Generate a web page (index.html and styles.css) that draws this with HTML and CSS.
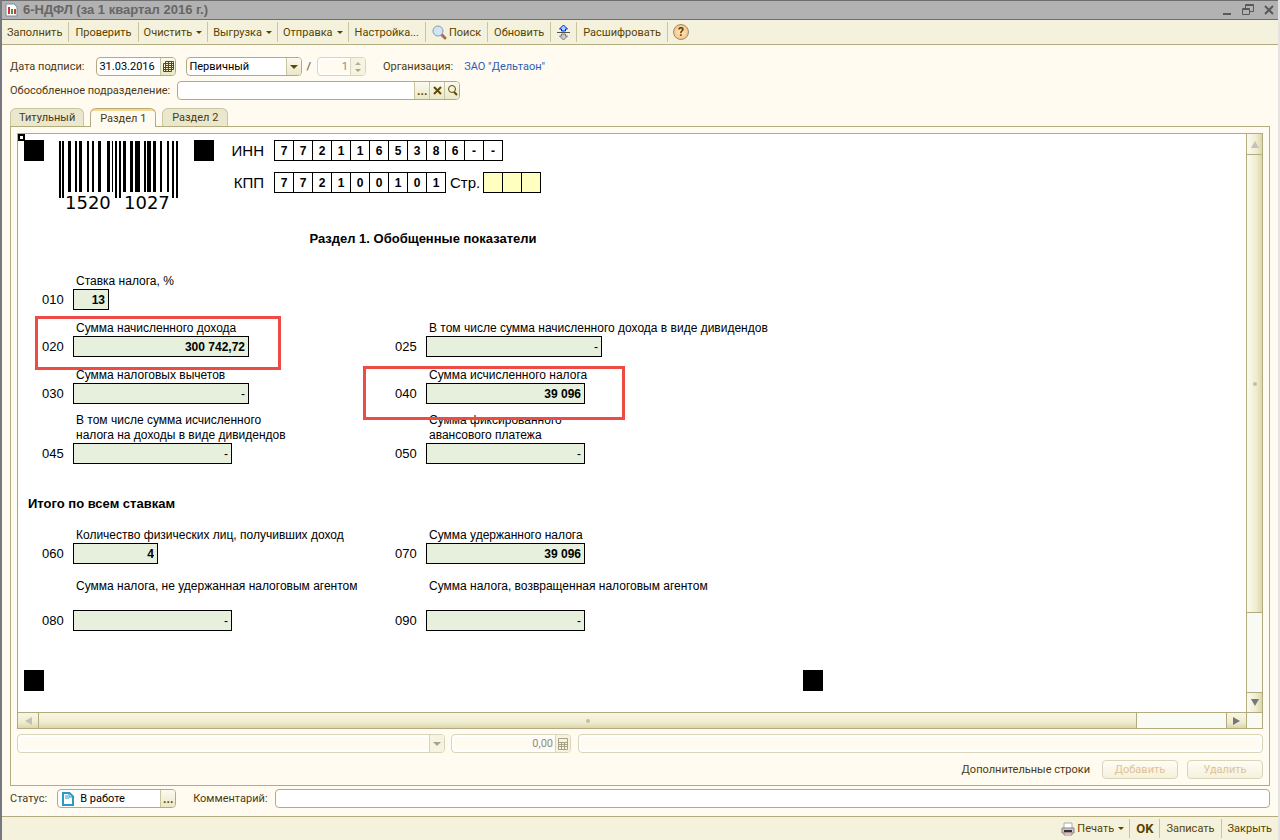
FILE: index.html
```html
<!DOCTYPE html>
<html lang="ru">
<head>
    <meta charset="UTF-8">
    <meta name="viewport" content="width=device-width, initial-scale=1.0">
    <title>6-НДФЛ (за 1 квартал 2016 г.)</title>
    <link rel="stylesheet" href="styles.css">
</head>
<body>
    <!-- Title bar -->
    <header class="titlebar">
        <svg class="title-icon" width="13" height="14" viewBox="0 0 13 14">
            <path d="M1 1h8l3 3v9H1z" fill="#fff" stroke="#7d8c9c"/>
            <path d="M3 4h2v7H3z" fill="#e03030"/>
            <path d="M6 6h2v5H6z" fill="#35a04a"/>
            <path d="M9 6h2v5H9z" fill="#e03030"/>
        </svg>
        <h1>6-НДФЛ (за 1 квартал 2016 г.)</h1>
        <div class="window-buttons">
            <button type="button" aria-label="Свернуть"><svg width="12" height="12"><path d="M2 9h8v2H2z" fill="#595959"/></svg></button>
            <button type="button" aria-label="Развернуть"><svg width="12" height="12" fill="none" stroke="#595959"><path d="M3.500 4V.5h8v7H8M3 1.500h9M.5 4.500h7v6h-7zM0 5.500h8"/></svg></button>
            <button type="button" aria-label="Закрыть"><svg width="12" height="12"><path d="M2 2l8 8M10 2l-8 8" stroke="#595959" stroke-width="2"/></svg></button>
        </div>
    </header>

    <!-- Toolbar -->
    <nav class="toolbar">
        <button type="button">Заполнить</button>
        <button type="button">Проверить</button>
        <button type="button" class="menu">Очистить</button>
        <button type="button" class="menu">Выгрузка</button>
        <button type="button" class="menu">Отправка</button>
        <button type="button">Настройка...</button>
        <button type="button">
            <svg width="15" height="15" viewBox="0 0 15 15">
                <path d="M9 9l4 4" stroke="#a5705a" stroke-width="3" stroke-linecap="round"/>
                <circle cx="6" cy="6" r="5" fill="#cfe6f8" stroke="#8f97ad"/>
            </svg>Поиск
        </button>
        <button type="button">Обновить</button>
        <button type="button" aria-label="Свернуть группы">
            <svg width="13" height="17" viewBox="0 0 13 17">
                <path d="M6.500 1l4 4h-2v2h-4V5h-2z" fill="#8fe0ff" stroke="#1414e0"/>
                <path d="M0 8.500h13" stroke="#555"/>
                <path d="M6.500 16l4-4h-2v-2h-4v2h-2z" fill="#ccc" stroke="#777"/>
            </svg>
        </button>
        <button type="button">Расшифровать</button>
        <button type="button" class="help" aria-label="Справка">?</button>
    </nav>

    <main>
        <!-- Document attributes -->
        <div class="row attributes">
            <label for="date">Дата подписи:</label>
            <div class="field date">
                <input type="text" id="date" value="31.03.2016">
                <button type="button" aria-label="Календарь">
                    <svg width="11" height="12" viewBox="0 0 11 12"><path d="M2.500.5h8v8h-2v2h-8v-8h2zM2.500 2.500h8M2.500 4.500h8M.5 6.500h10M.5 8.500h8M2.500 2v9M5.500 0v11M8.500 0v9" fill="none" stroke="#5f4a00"/></svg>
                </button>
            </div>
            <div class="field kind">
                <select aria-label="Вид документа"><option>Первичный</option></select>
                <span class="drop"></span>
            </div>
            <span class="slash">/</span>
            <div class="field number disabled">
                <input type="text" value="1" aria-label="Номер корректировки" disabled>
                <span class="spin"></span>
            </div>
            <span class="org">Организация:</span>
            <a href="#">ЗАО "Дельтаон"</a>
        </div>
        <div class="row">
            <label for="division">Обособленное подразделение:</label>
            <div class="field division">
                <input type="text" id="division">
                <button type="button" class="dots" aria-label="Выбрать">...</button>
                <button type="button" aria-label="Очистить"><svg width="9" height="9"><path d="M1 1l7 7M8 1l-7 7" stroke="#5f4a00" stroke-width="2"/></svg></button>
                <button type="button" aria-label="Открыть"><svg width="11" height="11" fill="none" stroke="#5f4a00"><circle cx="5" cy="4" r="3.500"/><path d="M7 7l3 3" stroke-width="2"/></svg></button>
            </div>
        </div>

        <!-- Tabs -->
        <div class="tabs">
            <button type="button">Титульный</button>
            <button type="button" class="active">Раздел 1</button>
            <button type="button">Раздел 2</button>
        </div>

        <div class="panel">
            <div class="sheet-frame">
                <div class="sheet">
                    <span class="cursor"></span>

                    <div class="sheet-head">
                        <span class="mark"></span>
                        <svg class="barcode" width="120" height="71" viewBox="0 0 120 71">
                            <path d="M0 0h2v57H0zM3 0h2v57H3zM56 0h2v57h-2zM60 0h2v57h-2zM113 0h2v57h-2zM117 0h2v57h-2z"/>
                            <path d="M9 0h3v51H9zM16 0h2v51h-2zM20 0h3v51h-3zM28 0h2v51h-2zM33 0h2v51h-2zM39 0h3v51h-3zM48 0h3v51h-3zM53 0h1v51h-1zM64 0h3v51h-3zM71 0h3v51h-3zM76 0h5v51h-5zM85 0h2v51h-2zM88 0h4v51h-4zM94 0h3v51h-3zM101 0h2v51h-2zM108 0h2v51h-2z"/>
                            <text x="6" y="68">1520</text>
                            <text x="65" y="68">1027</text>
                        </svg>
                        <span class="mark"></span>
                        <div class="codes">
                            <div class="code-row">
                                <span class="code-name">ИНН</span>
                                <div class="cells"><b>7</b><b>7</b><b>2</b><b>1</b><b>1</b><b>6</b><b>5</b><b>3</b><b>8</b><b>6</b><b>-</b><b>-</b></div>
                            </div>
                            <div class="code-row">
                                <span class="code-name">КПП</span>
                                <div class="cells"><b>7</b><b>7</b><b>2</b><b>1</b><b>0</b><b>0</b><b>1</b><b>0</b><b>1</b></div>
                                <span class="page-name">Стр.</span>
                                <div class="cells page"><b></b><b></b><b></b></div>
                            </div>
                        </div>
                    </div>

                    <h2>Раздел 1. Обобщенные показатели</h2>

                    <div class="figures">
                        <div class="figure">
                            <label for="f010">Ставка налога, %</label>
                            <span>010</span><input type="text" id="f010" class="w-xs" value="13">
                        </div>
                        <div class="figure start boxed">
                            <label for="f020">Сумма начисленного дохода</label>
                            <span>020</span><input type="text" id="f020" class="w-lg" value="300 742,72">
                        </div>
                        <div class="figure">
                            <label for="f025">В том числе сумма начисленного дохода в виде дивидендов</label>
                            <span>025</span><input type="text" id="f025" class="w-lg empty" value="-">
                        </div>
                        <div class="figure">
                            <label for="f030">Сумма налоговых вычетов</label>
                            <span>030</span><input type="text" id="f030" class="w-lg empty" value="-">
                        </div>
                        <div class="figure boxed wide">
                            <label for="f040">Сумма исчисленного налога</label>
                            <span>040</span><input type="text" id="f040" class="w-md" value="39 096">
                        </div>
                        <div class="figure double">
                            <label for="f045">В том числе сумма исчисленного<br>налога на доходы в виде дивидендов</label>
                            <span>045</span><input type="text" id="f045" class="w-md empty" value="-">
                        </div>
                        <div class="figure double">
                            <label for="f050">Сумма фиксированного<br>авансового платежа</label>
                            <span>050</span><input type="text" id="f050" class="w-md empty" value="-">
                        </div>
                    </div>

                    <h3>Итого по всем ставкам</h3>

                    <div class="figures totals">
                        <div class="figure">
                            <label for="f060">Количество физических лиц, получивших доход</label>
                            <span>060</span><input type="text" id="f060" class="w-sm" value="4">
                        </div>
                        <div class="figure">
                            <label for="f070">Сумма удержанного налога</label>
                            <span>070</span><input type="text" id="f070" class="w-md" value="39 096">
                        </div>
                        <div class="figure tall">
                            <label for="f080">Сумма налога, не удержанная налоговым агентом</label>
                            <span>080</span><input type="text" id="f080" class="w-md empty" value="-">
                        </div>
                        <div class="figure tall">
                            <label for="f090">Сумма налога, возвращенная налоговым агентом</label>
                            <span>090</span><input type="text" id="f090" class="w-md empty" value="-">
                        </div>
                    </div>

                    <div class="sheet-foot">
                        <span class="mark"></span>
                        <span class="mark"></span>
                    </div>
                </div>

                <!-- Scroll bars -->
                <div class="scroll vertical">
                    <button type="button" class="up" aria-label="Вверх"></button>
                    <div class="thumb"></div>
                    <div class="track"></div>
                    <button type="button" class="down" aria-label="Вниз"></button>
                </div>
                <div class="scroll horizontal">
                    <button type="button" class="left" aria-label="Влево"></button>
                    <div class="thumb"></div>
                    <div class="track"></div>
                    <button type="button" class="right" aria-label="Вправо"></button>
                </div>
                <div class="corner"></div>
            </div>

            <!-- Cell editing line -->
            <div class="row editing">
                <div class="field disabled cell-name">
                    <select aria-label="Показатель" disabled></select>
                    <span class="drop"></span>
                </div>
                <div class="field disabled cell-value">
                    <input type="text" value="0,00" aria-label="Значение" disabled>
                    <button type="button" aria-label="Калькулятор" disabled>
                        <svg width="10" height="12" viewBox="0 0 10 12"><path d="M.5.5h9v11h-9zM.5 4.500h9M.5 6.500h9M.5 8.500h9M3.500 4v7M6.500 4v7" fill="none" stroke="#a8a387"/></svg>
                    </button>
                </div>
                <div class="field disabled cell-note">
                    <input type="text" aria-label="Пояснение" disabled>
                </div>
            </div>
            <div class="row extra">
                <span>Дополнительные строки</span>
                <button type="button" class="push" disabled>Добавить</button>
                <button type="button" class="push" disabled>Удалить</button>
            </div>
        </div>

        <div class="row status">
            <label for="state">Статус:</label>
            <div class="field state">
                <svg width="12" height="14" viewBox="0 0 12 14"><path d="M1 1h6.500L11 4.500V13H1z" fill="#fff" stroke="#2a9ac8" stroke-width="2"/><path d="M7 1v4h4M3 4h3M3 6h4" fill="none" stroke="#2a9ac8"/></svg>
                <input type="text" id="state" value="В работе">
                <button type="button" class="dots" aria-label="Выбрать статус">...</button>
            </div>
            <label for="comment">Комментарий:</label>
            <div class="field comment"><input type="text" id="comment"></div>
        </div>
    </main>

    <!-- Bottom commands -->
    <footer class="toolbar commands">
        <button type="button" class="menu">
            <svg width="14" height="14" viewBox="0 0 14 14">
                <path d="M3 1h8v6H3z" fill="#fff" stroke="#aaa"/>
                <path d="M1 6h12v5H1z" fill="#c8c8c8" stroke="#888"/>
                <path d="M3 8h8v2H3z" fill="#333"/>
                <path d="M3 11h8v2H3z" fill="#fff" stroke="#b08080"/>
            </svg>Печать
        </button>
        <button type="button" class="ok">OK</button>
        <button type="button">Записать</button>
        <button type="button">Закрыть</button>
    </footer>
</body>
</html>
```

FILE: styles.css
```css
*,
*::before,
*::after {
    box-sizing: border-box;
}

body {
    margin: 0;
    min-height: 100vh;
    display: flex;
    flex-direction: column;
    background-color: #fffbf0;
    border-left: 2px solid #77777f;
    border-right: 2px solid #e4e2e2;
    color: #4a3a14;
    font-family: Roboto, sans-serif;
    font-size: 11px;
}

button,
input,
select {
    font: inherit;
    color: inherit;
}

button {
    display: flex;
    align-items: center;
    justify-content: center;
    padding: 0;
    border: none;
    background: none;
}

/* Title bar */
.titlebar {
    display: flex;
    align-items: center;
    height: 20px;
    padding: 0 3px;
    background-color: #b2b2b2;
    border-top: 1px solid #6e6e6e;
    border-bottom: 1px solid #6e6e6e;
}

.titlebar h1 {
    flex: 1;
    margin: 0 0 0 5px;
    color: #666;
    font-family: "Liberation Sans", sans-serif;
    font-size: 13px;
    line-height: 18px;
}

.window-buttons {
    display: flex;
    gap: 9px;
}

/* Toolbars */
.toolbar {
    display: flex;
    height: 25px;
    background-color: #f4f2dc;
    border-bottom: 1px solid #b3ab80;
}

.toolbar button {
    gap: 2px;
    padding: 0 6px;
    margin: 2px 0;
    color: #5a4300;
    border-right: 1px solid #c9c5a0;
}

.toolbar button:first-child {
    padding-left: 5px;
}

.toolbar .menu {
    padding: 0 5px;
}

.menu::after {
    content: "";
    margin-left: 2px;
    border: 3px solid transparent;
    border-top-color: #5a4300;
    border-bottom: none;
}

.toolbar .help {
    width: 16px;
    height: 16px;
    margin: 4px 5px;
    padding: 0;
    border: 1px solid #a08a70;
    border-radius: 50%;
    background: radial-gradient(#fff0d8, #f5b25c);
    font-size: 12px;
    font-weight: bold;
}

/* Fields */
main {
    flex: 1;
    display: flex;
    flex-direction: column;
    padding: 12px 8px 8px;
}

.row {
    display: flex;
    align-items: center;
    height: 19px;
}

.attributes {
    margin-bottom: 5px;
}

.field {
    display: flex;
    height: 19px;
    overflow: hidden;
    border: 1px solid #b3ab80;
    border-radius: 4px;
    background-color: #fff;
    color: #000;
}

.field input,
.field select {
    flex: 1;
    min-width: 0;
    padding: 0 2px;
    border: none;
    outline: none;
    background: none;
    appearance: none;
}

.field button,
.drop,
.spin {
    width: 15px;
    flex-shrink: 0;
    border-left: 1px solid #c9c5a0;
    background: linear-gradient(#fbfaf0, #ebe7c8);
    color: #5f4a00;
}

.field .dots {
    font-size: 12px;
    font-weight: bold;
}

.drop,
.spin {
    display: flex;
    flex-direction: column;
    gap: 4px;
    align-items: center;
    justify-content: center;
}

.drop::after,
.spin::after {
    content: "";
    border: 4px solid transparent;
    border-top-color: #5f4a00;
    border-bottom: none;
}

.spin::before {
    content: "";
    border: 3px solid transparent;
    border-bottom-color: #b5b095;
    border-top: none;
}

.spin::after {
    border-width: 3px;
    border-bottom: none;
}

.field.disabled {
    border-color: #d9d5ba;
    background-color: #fffbf0;
    box-shadow: inset 0 0 0 2px #fff;
    color: #8c8c8c;
}

.disabled .drop,
.disabled .spin,
.disabled button {
    background: #f6f3e0;
    border-color: #d9d5ba;
}

.disabled .drop::after,
.disabled .spin::after {
    border-top-color: #a8a387;
}

.date {
    width: 80px;
    margin-left: 12px;
}

.kind {
    width: 116px;
    margin-left: 10px;
}

.slash {
    margin: 0 6px 0 4px;
}

.number {
    width: 49px;
}

.number input,
.cell-value input {
    text-align: right;
}

.org {
    margin: 0 11px 0 17px;
}

.row a {
    color: #2f5bb7;
    text-decoration: none;
}

.division {
    width: 283px;
    margin-left: 7px;
}

/* Tabs */
.tabs {
    display: flex;
    gap: 6px;
    margin-top: 8px;
}

.tabs button {
    min-width: 66px;
    height: 18px;
    padding: 0 8px;
    border: 1px solid #c9c5a0;
    border-bottom: none;
    border-radius: 6px 6px 0 0;
    background-color: #ebe7cd;
}

.tabs .active {
    z-index: 1;
    height: 19px;
    margin-bottom: -1px;
    border-color: #b3ab80;
    background: linear-gradient(#fbd98c 2px, #fffbf0 2px);
}

.panel {
    flex: 1;
    display: flex;
    flex-direction: column;
    padding: 6px;
    border: 1px solid #b3ab80;
}

/* Printed form */
.sheet-frame {
    flex: 1;
    display: grid;
    grid-template-columns: 1fr 16px;
    grid-template-rows: 1fr 16px;
    border: 1px solid #b3ab80;
}

.sheet {
    position: relative;
    padding: 6px;
    background-color: #fff;
    color: #000;
    font-family: "Liberation Sans", sans-serif;
    font-size: 12px;
}

.cursor {
    position: absolute;
    top: 0;
    left: 0;
    width: 7px;
    height: 7px;
    border: 2px solid #000;
}

.mark {
    width: 20px;
    height: 21px;
    background-color: #000;
}

.sheet-head {
    display: flex;
    height: 91px;
}

.barcode {
    margin: 1px 15px 0;
    font-family: "DejaVu Sans", sans-serif;
    font-size: 18px;
}

.codes {
    display: flex;
    flex-direction: column;
    gap: 11px;
}

.code-row {
    display: flex;
    height: 21px;
    font-size: 15px;
    line-height: 21px;
}

.code-name {
    width: 50px;
    margin-right: 10px;
    text-align: right;
}

.page-name {
    margin: 0 3px 0 4px;
}

.cells {
    display: flex;
    border-left: 1px solid #000;
    font-size: 12px;
    line-height: 20px;
}

.cells b {
    width: 19px;
    height: 21px;
    border: 1px solid #000;
    border-left: none;
    text-align: center;
}

.page {
    background-color: #ffffc0;
}

h2,
h3 {
    margin: 0;
    font-size: 13px;
    line-height: 16px;
}

.sheet h2 {
    width: 798px;
    text-align: center;
}

.sheet h3 {
    margin: 32px 0 16px 4px;
}

.figures {
    display: grid;
    grid-template-columns: 353px 353px;
    row-gap: 11px;
    margin: 27px 0 0 18px;
}

.figures.totals {
    row-gap: 15px;
    margin-top: 0;
}

.figure {
    position: relative;
    display: grid;
    grid-template-columns: 31px 1fr;
    align-content: end;
    white-space: nowrap;
}

.start {
    grid-column: 1;
}

.double {
    margin-top: -2px;
}

.figure label {
    grid-column: 2;
    padding-left: 3px;
    line-height: 15px;
}

.tall label {
    padding-bottom: 16px;
}

.figure span {
    font-size: 13px;
    line-height: 21px;
}

.figure input {
    height: 21px;
    padding: 0 3px;
    border: 1px solid #000;
    background-color: #e6f0dc;
    font-weight: bold;
    text-align: right;
}

.figure .empty {
    font-weight: normal;
}

.w-xs {
    width: 36px;
}

.w-sm {
    width: 85px;
}

.w-md {
    width: 159px;
}

.w-lg {
    width: 176px;
}

/* Red frame round the figures to check */
.boxed::after {
    content: "";
    position: absolute;
    z-index: 1;
    top: -5px;
    left: -7px;
    width: 246px;
    height: 54px;
    border: 3px solid #ee4b46;
}

.boxed.wide::after {
    top: -2px;
    left: -32px;
    width: 262px;
}

.sheet-foot {
    display: flex;
    justify-content: space-between;
    width: 799px;
    margin-top: 39px;
}

/* Scroll bars */
.scroll {
    display: flex;
}

.scroll button {
    flex: 0 0 20px;
}

.vertical {
    flex-direction: column;
    border-left: 1px solid #b3ab80;
    background: linear-gradient(90deg, #fbfaf0, #f0edd0 60%, #ddd6ac);
}

.horizontal {
    border-top: 1px solid #b3ab80;
    background: linear-gradient(#f8f6e4, #f0edd0 60%, #ddd6ac);
}

.thumb {
    flex: 459;
    display: flex;
    align-items: center;
    justify-content: center;
}

.thumb::after {
    content: "";
    width: 4px;
    height: 4px;
    border-radius: 50%;
    background-color: #c4bf9c;
}

.track {
    flex: 79;
    background-color: #fafaf4;
}

.horizontal .thumb {
    flex: 1098;
}

.horizontal .track {
    flex: 89;
}

.vertical .thumb,
.vertical .track,
.vertical .down {
    border-top: 1px solid #b3ab80;
}

.horizontal .thumb,
.horizontal .track,
.horizontal .right {
    border-left: 1px solid #b3ab80;
}

.scroll button::after {
    content: "";
    border: 0 solid transparent;
}

.scroll .up::after {
    border-width: 0 4px 7px;
    border-bottom-color: #c4c2b4;
}

.scroll .down::after {
    border-width: 7px 4px 0;
    border-top-color: #77777a;
}

.scroll .left::after {
    border-width: 4px 7px 4px 0;
    border-right-color: #c4c2b4;
}

.scroll .right::after {
    border-width: 4px 0 4px 7px;
    border-left-color: #77777a;
}

.corner {
    border-top: 1px solid #b3ab80;
    border-left: 1px solid #b3ab80;
    background-color: #fafaf4;
}

/* Lines under the form */
.editing {
    margin-top: 5px;
}

.cell-name {
    width: 428px;
    margin-right: 6px;
}

.cell-value {
    width: 120px;
    margin-right: 7px;
}

.cell-note {
    flex: 1;
}

.extra {
    justify-content: flex-end;
    margin-top: 7px;
}

.push {
    width: 76px;
    height: 19px;
    margin-left: 9px;
    border: 1px solid #d9d5ba;
    border-radius: 4px;
    background: linear-gradient(#fffdf5, #f4f1dc);
    color: #e3c193;
}

.extra span {
    margin-right: 3px;
}

.status {
    margin-top: 3px;
}

.state {
    width: 119px;
    margin: 0 17px 0 10px;
}

.state svg {
    margin: 2px 4px;
}

.comment {
    flex: 1;
    margin-left: 7px;
}

.commands {
    justify-content: flex-end;
    height: 24px;
    border-top: 1px solid #b3ab80;
    border-bottom: none;
}

.commands button:last-child {
    border-right: none;
}

.toolbar .ok {
    font-size: 13px;
    font-weight: bold;
}
```
